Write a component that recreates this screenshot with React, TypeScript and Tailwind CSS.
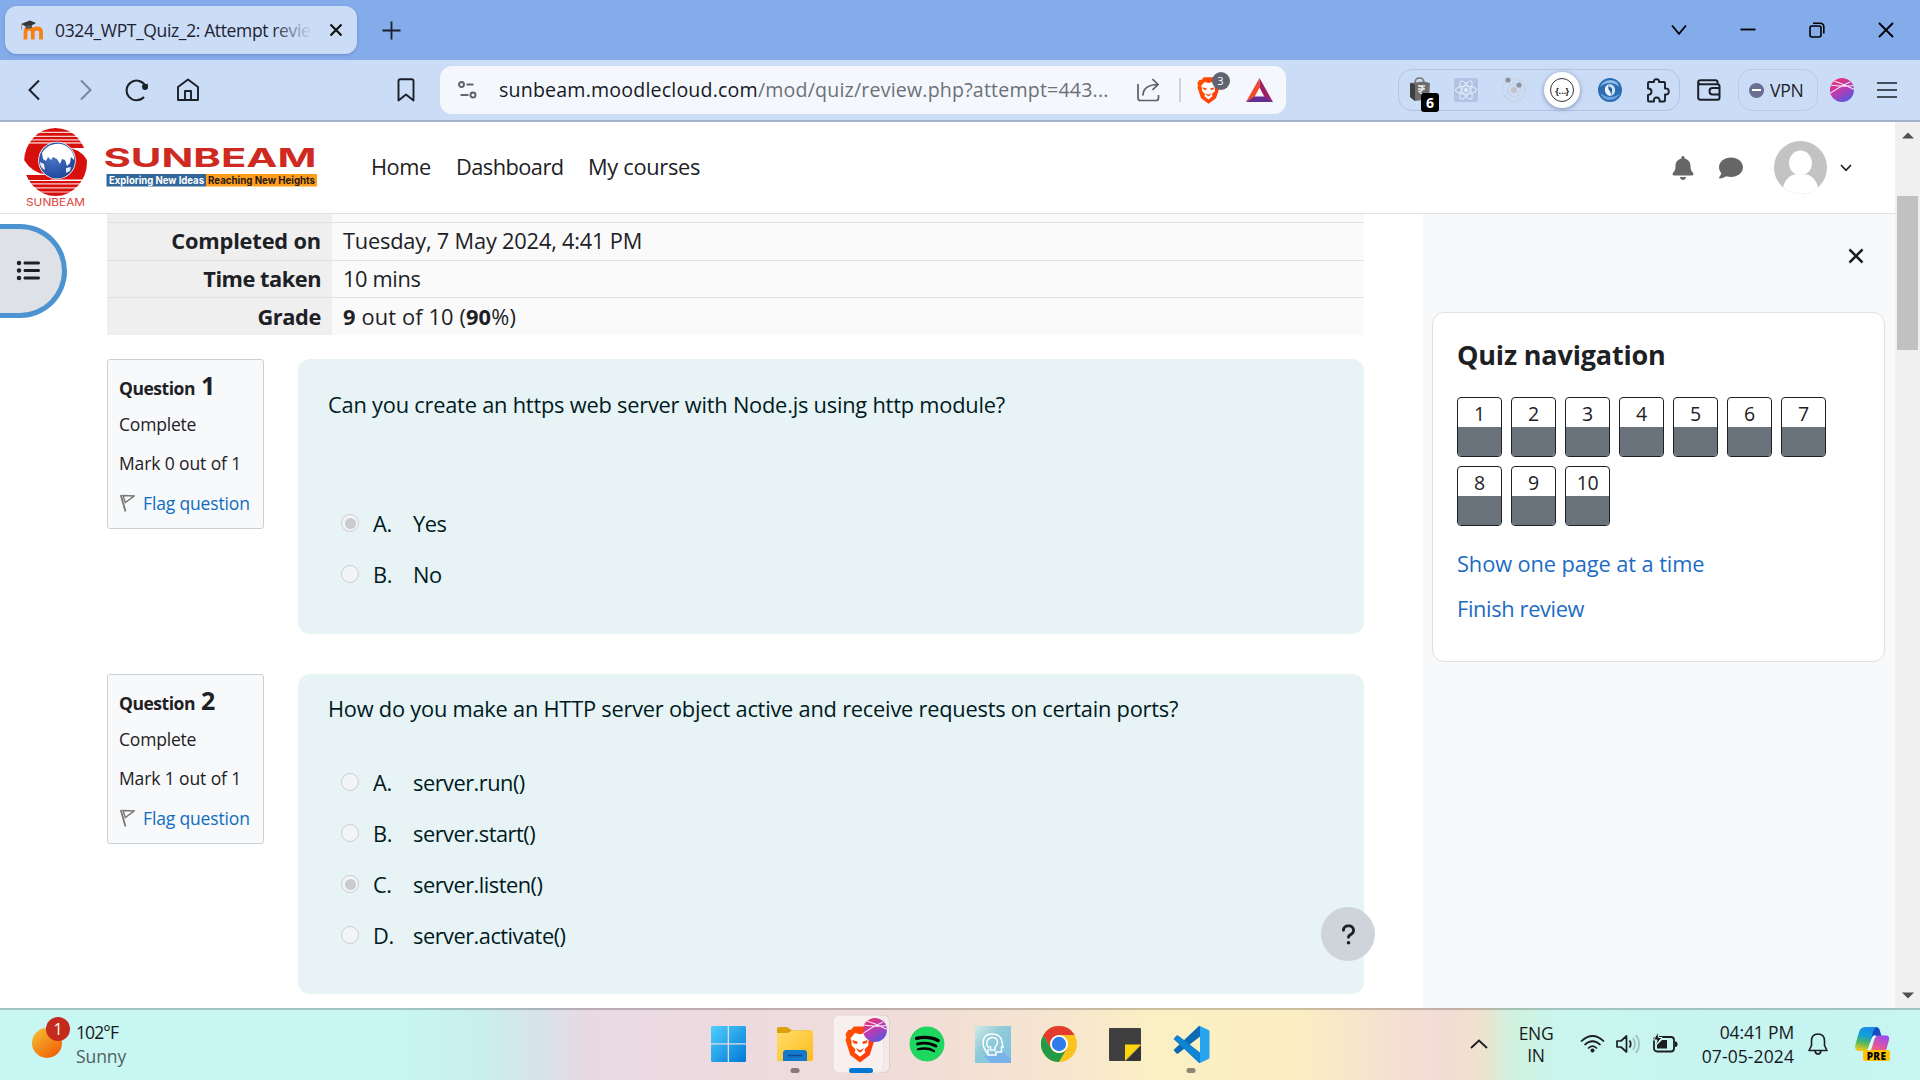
import type { ReactNode } from "react";
import { FaBell, FaComment, FaListUl, FaQuestion, FaSpotify, FaReact } from "react-icons/fa6";

const ink = "#1d2125";

/* ---------- shared drawings ---------- */

function BraveIcon({ w, h, id }: { w: number; h: number; id: string }) {
  return (
    <svg className="block" width={w} height={h} viewBox="0 0 24 28" preserveAspectRatio="none">
      <defs>
        <linearGradient id={id} x1="0" y1="0" x2="1" y2="0.3">
          <stop offset="0" stopColor="#ff5500" />
          <stop offset="1" stopColor="#ff3a0a" />
        </linearGradient>
      </defs>
      <path d="M7 0.300 H17 L19.200 2.800 L21.500 3 L23.700 6.200 L22.900 8.500 L23.600 10.500 L19.800 22 L12 27.700 L4.200 22 L0.400 10.500 L1.100 8.500 L0.300 6.200 L2.500 3 L4.800 2.800Z" fill={`url(#${id})`} />
      <path d="M8 5.300 L12 6.200 L16 5.300 L19.600 9.200 L18.600 12.200 L18.800 14.500 L15.600 17.700 L16.300 20 L12 23.300 L7.700 20 L8.400 17.700 L5.200 14.500 L5.400 12.200 L4.400 9.200Z" fill="#fff" />
      <path d="M5.800 10.600 L10.300 11.900 L9.600 13.600 L6.800 13Z M18.200 10.600 L13.700 11.900 L14.400 13.600 L17.200 13Z M8.700 16.700 L12 18.300 L15.300 16.700 L13.500 19.300 L12 20 L10.500 19.300Z" fill="#fb4a0d" />
    </svg>
  );
}

function ProfileOrb({ size, id }: { size: number; id: string }) {
  return (
    <svg width={size} height={size} viewBox="0 0 24 24">
      <defs>
        <linearGradient id={id} x1="0.2" y1="0" x2="0.8" y2="1">
          <stop offset="0" stopColor="#ef2f6b" />
          <stop offset="0.5" stopColor="#b83cb4" />
          <stop offset="1" stopColor="#4d5be6" />
        </linearGradient>
        <clipPath id={id + "c"}>
          <circle cx="12" cy="12" r="12" />
        </clipPath>
      </defs>
      <g clipPath={`url(#${id}c)`}>
        <rect width="24" height="24" fill={`url(#${id})`} />
        <path d="M-1 16 Q9 9 20 4 M4 3 Q14 6 25 12 M0 7 Q12 9 24 7.500" fill="none" stroke="#f6e6f6" strokeWidth="1.100" />
      </g>
    </svg>
  );
}

function SunbeamLogo() {
  return (
    <svg className="-mt-[2px] shrink-0 overflow-visible" width="296" height="84" viewBox="22 125 296 84">
      <defs>
        <clipPath id="oval">
          <ellipse cx="55.500" cy="162" rx="31.500" ry="34" />
        </clipPath>
        <radialGradient id="sea" cx="0.4" cy="0.4" r="0.7">
          <stop offset="0" stopColor="#4a78c8" />
          <stop offset="1" stopColor="#1a4296" />
        </radialGradient>
      </defs>
      <g clipPath="url(#oval)" fill="#d8100c">
        <rect x="22" y="128" width="68" height="3.800" />
        <rect x="22" y="132.800" width="68" height="3" />
        <rect x="22" y="136.800" width="68" height="2.600" />
        <rect x="22" y="140.400" width="68" height="2" />
        <rect x="22" y="181" width="68" height="2.400" />
        <rect x="22" y="184.400" width="68" height="3" />
        <rect x="22" y="188.400" width="68" height="3.200" />
        <rect x="22" y="192.400" width="68" height="4" />
        <path d="M22 143.500 H90 V148 H66 L57 161 L50 180 H22Z" />
        <path d="M90 150 V179.500 H22 V175 H46 L57 161 L66 146 Q80 147 90 158Z" />
      </g>
      <path d="M86 148 H66 Q80 148 87 160 L91 158Z" fill="#fff" />
      <path d="M24 175 H47 Q32 173 24 160 L20 166Z" fill="#fff" />
      <circle cx="57" cy="160.500" r="18.800" fill="#fff" />
      <circle cx="57" cy="160.500" r="18" fill="url(#sea)" />
      <path d="M42 153 Q46 146 53 144.500 Q62 142 69 148 Q75 154 74 160 L71 157 L70 163 L67 166 L65 160 L62 159 L60 164 L57 159 L53 157 L51 160 L48 157 L46 161 L43 159Z" fill="#fff" />
      <path d="M40 162 L44 164 L45 170 Q40 168 40 162Z M66 168 L71 167 L70 171 L66 173Z" fill="#fff" opacity=".9" />
      <text x="26" y="206" textLength="59" lengthAdjust="spacingAndGlyphs" fontFamily="Inter, sans-serif" fontSize="10.500" fontWeight="400" fill="#dc3f3a">SUNBEAM</text>
      <text x="103.500" y="167" textLength="213" lengthAdjust="spacingAndGlyphs" fontFamily="Inter, sans-serif" fontSize="26" fontWeight="700" fill="#cf2a22">SUNBEAM</text>
      <rect x="106.500" y="174" width="99.500" height="12.500" fill="#336699" />
      <rect x="206" y="174" width="111" height="12.500" fill="#ff9d1b" />
      <text x="109" y="184" textLength="95" lengthAdjust="spacingAndGlyphs" fontFamily="Inter, sans-serif" fontSize="10.300" fontWeight="700" fill="#fff">Exploring New Ideas</text>
      <text x="208" y="184" textLength="107" lengthAdjust="spacingAndGlyphs" fontFamily="Inter, sans-serif" fontSize="10.300" fontWeight="700" fill="#1f1a14">Reaching New Heights</text>
    </svg>
  );
}

/* ---------- browser chrome ---------- */

function TabStrip() {
  return (
    <div className="flex h-[60px] shrink-0 items-center bg-[#84abea]">
      <div className="ml-[5px] flex h-12 w-[352px] items-center rounded-xl bg-[#cbdcf7] pl-[15px] shadow-[0_1px_3px_rgba(60,90,150,0.35)]">
        <svg width="24" height="20" viewBox="0 0 24 20">
          <path d="M5.500 19.500 V12 Q5.500 8.500 9 8.500 Q12.800 8.500 12.800 12 V19.500 M12.800 12 Q12.800 8.500 17 8.500 Q21 8.500 21 12 V19.500" fill="none" stroke="#f98012" strokeWidth="3.800" />
          <path d="M1 4 L10 0.500 L16 3 L8 7.500Z" fill="#333" />
          <path d="M5 5.500 L12 5 V8 L6 9Z" fill="#555" />
          <path d="M1.500 4.500 V10" stroke="#999" strokeWidth="1" />
        </svg>
        <div className="relative ml-[11px] w-[257px] overflow-hidden whitespace-nowrap text-[17.5px] leading-6 tracking-[-0.37px] text-[#1d2330]">
          0324_WPT_Quiz_2: Attempt revie
          <div className="absolute inset-y-0 right-0 w-10 bg-gradient-to-r from-transparent to-[#cbdcf7]" />
        </div>
        <svg className="ml-[17px]" width="14" height="14" viewBox="0 0 14 14">
          <path d="M1.500 1.500 L12.500 12.500 M12.500 1.500 L1.500 12.500" stroke="#111" strokeWidth="2.200" />
        </svg>
      </div>
      <svg className="ml-[25px]" width="19" height="19" viewBox="0 0 19 19">
        <path d="M9.500 0.500 V18.500 M0.500 9.500 H18.500" stroke="#1b1f28" strokeWidth="1.800" />
      </svg>
      <div className="ml-auto flex items-center text-black">
        <Slot w={68}>
          <svg width="16" height="12" viewBox="0 0 16 12"><path d="M1 1.500 L8 9.800 L15 1.500" fill="none" stroke="#000" strokeWidth="1.800" /></svg>
        </Slot>
        <Slot w={69}>
          <svg width="16" height="4" viewBox="0 0 16 4"><path d="M0.500 1.500 H15.500" stroke="#000" strokeWidth="1.800" /></svg>
        </Slot>
        <Slot w={69}>
          <svg width="16" height="16" viewBox="0 0 16 16" fill="none" stroke="#000" strokeWidth="1.600">
            <rect x="1" y="4" width="11" height="11" rx="2" />
            <path d="M4 1.200 H11 Q14.800 1.200 14.800 5 V11.500" />
          </svg>
        </Slot>
        <Slot w={69}>
          <svg width="16" height="16" viewBox="0 0 16 16"><path d="M1 1 L15 15 M15 1 L1 15" stroke="#000" strokeWidth="1.800" /></svg>
        </Slot>
      </div>
    </div>
  );
}

function Slot({ w, children }: { w: number; children: ReactNode }) {
  return (
    <div className="flex shrink-0 items-center justify-center" style={{ width: w }}>
      {children}
    </div>
  );
}

function Toolbar() {
  return (
    <div className="flex h-[62px] shrink-0 items-center border-b-2 border-[#a3b2cb] bg-[#cbdcf7]">
      <div className="ml-[9px] flex items-center">
        <Slot w={51}>
          <svg className="-ml-[2px]" width="14" height="22" viewBox="0 0 14 22"><path d="M12 1.500 L2.500 11 L12 20.500" fill="none" stroke="#1b1f28" strokeWidth="2" /></svg>
        </Slot>
        <Slot w={51}>
          <svg width="14" height="22" viewBox="0 0 14 22"><path d="M2 1.500 L11.500 11 L2 20.500" fill="none" stroke="#7b8799" strokeWidth="2" /></svg>
        </Slot>
        <Slot w={51}>
          <svg width="24" height="24" viewBox="0 0 24 24">
            <path d="M19 19 A10 9.800 0 1 1 20.500 8" fill="none" stroke="#1b1f28" strokeWidth="2" />
            <path d="M16.500 8 L22.800 5.500 L22.500 11Z" fill="#1b1f28" />
            <circle cx="20" cy="9" r="2.900" fill="#1b1f28" />
          </svg>
        </Slot>
        <Slot w={51}>
          <svg width="24" height="24" viewBox="0 0 24 24" fill="none" stroke="#1b1f28" strokeWidth="1.900" strokeLinejoin="round">
            <path d="M2 9 L12 1.500 L22 9 V22 H2Z" />
            <path d="M9 22 V13 H15 V22" />
          </svg>
        </Slot>
      </div>
      <svg className="ml-[184px]" width="18" height="24" viewBox="0 0 18 24">
        <path d="M1.500 3 Q1.500 1.200 3.300 1.200 H14.700 Q16.500 1.200 16.500 3 V22.500 L9 16.500 L1.500 22.500Z" fill="none" stroke="#1b1f28" strokeWidth="1.900" strokeLinejoin="round" />
      </svg>
      <div className="ml-[25px] flex h-12 w-[846px] items-center rounded-xl bg-[#f4f8fd]">
        <svg className="ml-[18px] shrink-0" width="19" height="18" viewBox="0 0 19 18" fill="none" stroke="#5b5f68" strokeWidth="1.900">
          <circle cx="3.500" cy="3.500" r="2.500" /><path d="M8.500 3.500 H15.500" />
          <circle cx="15" cy="14" r="2.500" /><path d="M2.500 14 H10.500" />
        </svg>
        <div className="ml-[22px] w-[630px] whitespace-nowrap text-[19.6px] leading-7 tracking-[0.18px] text-[#6b7078]">
          <span className="text-[#16191f]">sunbeam.moodlecloud.com</span>/mod/quiz/review.php?attempt=443...
        </div>
        <svg className="ml-[8px] shrink-0" width="23" height="24" viewBox="0 0 23 24" fill="none" stroke="#5b5f68" strokeWidth="1.700">
          <path d="M1 6 V20 Q1 22.500 3.500 22.500 H19 Q21.500 22.500 21.500 20 V17" />
          <path d="M6 17.500 Q6 7 20.500 6.500 M15.500 1.200 L21 6.500 L15.500 11.800" />
        </svg>
        <div className="ml-[19px] h-6 w-[1.5px] bg-[#cfd3da]" />
        <div className="relative ml-[16px]">
          <BraveIcon w={23} h={27} id="brA" />
          <div className="absolute -top-[5px] left-[15px] flex h-[18px] w-[18px] items-center justify-center rounded-full bg-[#5f6470] text-[11px] leading-none text-white">3</div>
        </div>
        <svg className="ml-[26px]" width="27" height="24" viewBox="0 0 27 24">
          <path d="M13.500 0 L0 24 L8.500 19 L13.500 9.500Z" fill="#f2492c" />
          <path d="M13.500 0 L27 24 L18.500 19 L13.500 9.500Z" fill="#9e1f63" />
          <path d="M0 24 H27 L18.500 18.500 H8.500Z" fill="#662d91" />
        </svg>
      </div>
      <div className="ml-[112px] flex h-[42px] w-[282px] items-center rounded-[14px] border-[1.5px] border-[#b3c3e2]">
        <div className="relative flex w-[43px] shrink-0 justify-center pr-[2px]">
          <svg width="22" height="26" viewBox="0 0 22 26">
            <path d="M6 6 Q6 1 10.500 1 Q15 1 15 6" fill="none" stroke="#777" strokeWidth="1.500" />
            <path d="M1 6 L15 4.500 L21 6 L20 22 L6 24 L1 20Z" fill="#6e6e6e" />
            <path d="M1 6 L6 7.500 V24 L1 20Z" fill="#3f3f3f" />
            <path d="M9 9 H16 M9 12 H16 M10 9 Q15 10 14 12 Q13 14.500 10 14.500 L14 18" fill="none" stroke="#eee" strokeWidth="1.300" />
          </svg>
          <div className="absolute -bottom-[9px] left-[22px] flex h-[19px] w-[18px] items-center justify-center rounded-[3px] bg-black text-[14px] font-bold leading-none text-white">6</div>
        </div>
        <Slot w={48}>
          <div className="flex h-6 w-6 items-center justify-center rounded-[2px] bg-[#b1c3e3]"><FaReact className="h-[22px] w-[22px] text-[#e8effb]" /></div>
        </Slot>
        <Slot w={48}>
          <svg width="26" height="26" viewBox="0 0 26 26" fill="none" stroke="#c9cdd4" strokeWidth="1.200">
            <circle cx="13" cy="13" r="11.300" strokeDasharray="3 1.500" />
            <circle cx="13" cy="13" r="6.500" strokeDasharray="3 1" />
            <circle cx="13" cy="13" r="3" fill="#c3c3c3" stroke="none" />
            <circle cx="7" cy="3" r="2.600" fill="#8d939c" stroke="none" />
            <circle cx="18" cy="8" r="2.600" fill="#8d939c" stroke="none" />
          </svg>
        </Slot>
        <Slot w={48}>
          <div className="flex h-9 w-9 shrink-0 items-center justify-center rounded-full bg-white shadow-[0_1px_4px_rgba(40,60,110,0.5)]">
            <div className="flex h-6 w-6 items-center justify-center rounded-full border-[1.5px] border-[#333] text-[9px] font-bold leading-none tracking-[-0.5px] text-[#222]">{"{…}"}</div>
          </div>
        </Slot>
        <Slot w={48}>
          <svg width="24" height="24" viewBox="0 0 24 24">
            <circle cx="12" cy="12" r="12" fill="#2b6cb4" />
            <path d="M2 9 Q5 2 13 2 Q20 3 21.500 9 Q17 5 12 5 Q6 5 2 9Z" fill="#8fbbe6" />
            <path d="M22 15 Q19 22 11 22 Q4 21 2.500 15 Q7 19 12 19 Q18 19 22 15Z" fill="#6ba3da" />
            <path d="M7 13 Q6 8 11 6 Q9 11 12 13 Q14 14.500 12.500 18 Q8 17.500 7 13Z" fill="#eef6fd" />
            <path d="M17 11 Q18 16 13 18 Q15 13 12 11 Q10 9.500 11.500 6 Q16 6.500 17 11Z" fill="#cfe3f6" />
            <path d="M11.500 8.500 Q14.500 9.500 14 13 Q13.500 15 12.500 15.500 Q13 13 11.500 12 Q10.500 10.500 11.500 8.500Z" fill="#1b58a0" />
          </svg>
        </Slot>
        <Slot w={48}>
          <svg width="24" height="25" viewBox="0 0 24 25" fill="none" stroke="#1b1f28" strokeWidth="1.900" strokeLinejoin="round">
            <path d="M2 5 Q2 4 3 4 H8 Q7.500 1.200 10.500 1.200 Q13.500 1.200 13 4 H18 Q19 4 19 5 V10.500 Q22.800 10 22.800 13.500 Q22.800 17 19 16.500 V22.500 Q19 23.500 18 23.500 H13.500 Q14 19.500 10.700 19.500 Q7.500 19.500 8 23.500 H3 Q2 23.500 2 22.500 V17 Q5.500 17 5.500 13.700 Q5.500 10.500 2 10.500Z" />
          </svg>
        </Slot>
      </div>
      <svg className="ml-[17px]" width="24" height="22" viewBox="0 0 24 22" fill="none" stroke="#1b1f28" strokeWidth="2" strokeLinejoin="round">
        <path d="M20.500 5 V3 Q20.500 1.200 18.500 1.200 H3.500 Q1.200 1.200 1.200 3.300 Q1.200 5.200 3.500 5.200 H20.500 Q22.500 5.200 22.500 7.200 V18.500 Q22.500 20.700 20.500 20.700 H3.500 Q1.200 20.700 1.200 18.500 V3.500" />
        <path d="M22.500 9 H15.500 Q12.500 9 12.500 12 Q12.500 15.500 15.500 15.500 H22.500" />
      </svg>
      <div className="ml-[17px] flex h-[42px] w-[80px] items-center rounded-[14px] border-[1.5px] border-[#bacae8] pl-[10px]">
        <div className="flex h-[15px] w-[15px] items-center justify-center rounded-full bg-[#696e92]"><div className="h-[2px] w-[9px] bg-white" /></div>
        <span className="ml-[6px] text-[17.6px] tracking-[-0.3px] text-[#1b1f28]">VPN</span>
      </div>
      <div className="ml-[12px]"><ProfileOrb size={24} id="orbA" /></div>
      <svg className="ml-[23px]" width="20" height="16" viewBox="0 0 20 16"><path d="M0 1 H20 M0 8 H20 M0 15 H20" stroke="#1b1f28" strokeWidth="1.700" /></svg>
    </div>
  );
}

/* ---------- site ---------- */

function SiteHeader() {
  return (
    <header className="flex h-[92px] shrink-0 items-center border-b border-[#dee2e6] bg-white pl-[22px] text-[21.8px] text-[#1d2125]">
      <SunbeamLogo />
      <span className="ml-[53px] w-[85px] tracking-[-0.45px]">Home</span>
      <span className="w-[132px] tracking-[-0.55px]">Dashboard</span>
      <span className="tracking-[-0.3px]">My courses</span>
      <div className="ml-auto flex items-center">
        <Slot w={48}><FaBell className="h-6 w-[22px] text-[#666]" /></Slot>
        <Slot w={48}><FaComment className="h-6 w-6 text-[#666]" /></Slot>
        <svg className="ml-[19px]" width="53" height="53" viewBox="0 0 53 53">
          <defs><clipPath id="av"><circle cx="26.500" cy="26.500" r="26.500" /></clipPath></defs>
          <g clipPath="url(#av)">
            <rect width="53" height="53" fill="#c3c3c3" />
            <ellipse cx="26.500" cy="22" rx="11.500" ry="12.500" fill="#fff" />
            <path d="M8 53 Q9 37 20 33.500 H33 Q44 37 45 53Z" fill="#fff" />
          </g>
        </svg>
        <svg className="ml-[13px] mr-[43px]" width="12" height="8" viewBox="0 0 12 8"><path d="M1 1 L6 6.300 L11 1" fill="none" stroke={ink} strokeWidth="1.700" /></svg>
      </div>
    </header>
  );
}

function SummaryRow({ h, label, track, children }: { h: number; label: string; track: string; children: ReactNode }) {
  return (
    <div className="flex items-center border-t border-[#dee2e6] bg-[#fafafa]" style={{ height: h }}>
      <div className={"flex h-full w-[225px] items-center justify-end bg-[#efefef] pr-[11px] font-bold " + track}>{label}</div>
      <div className="pl-[11px]">{children}</div>
    </div>
  );
}

function InfoBox({ n, mark }: { n: number; mark: string }) {
  return (
    <div className="flex h-[170px] w-[157px] flex-col rounded-[3px] border border-[#cad0d7] bg-[#f8f9fa] pl-[11px] pt-[9px] text-[17.5px] leading-6 text-[#1d2125]">
      <div className="h-8 whitespace-nowrap font-bold leading-8 tracking-[-0.48px]">
        Question<span className="ml-[6px] text-[25px]">{n}</span>
      </div>
      <div className="mt-[11px] tracking-[-0.2px]">Complete</div>
      <div className="mt-[15px] tracking-[-0.12px]">{mark}</div>
      <div className="mt-[16px] flex items-center tracking-[-0.15px] text-[#0f6cbf]">
        <svg className="ml-px mr-[8px]" width="15" height="18" viewBox="0 0 15 18" fill="none" stroke="#777" strokeWidth="1.400">
          <path d="M0.800 1 L5.500 17.500" strokeWidth="1.800" /><path d="M3 1.500 L14 2 L5.300 8.500Z" />
        </svg>
        Flag question
      </div>
    </div>
  );
}

function Radio({ on }: { on?: boolean }) {
  return (
    <span className="flex h-[18px] w-[18px] items-center justify-center rounded-full border-[1.5px] border-[#cccfd1] bg-[#f2f4f5]">
      {on && <span className="h-[11px] w-[11px] rounded-full bg-[#c9cbcd]" />}
    </span>
  );
}

function Answers({ items, picked }: { items: string[]; picked: number }) {
  return (
    <div className="flex flex-col">
      {items.map((t, i) => (
        <div key={t} className="flex h-[51px] items-center pb-[2px]">
          <span className="-mt-px ml-[13px]"><Radio on={i === picked} /></span>
          <span className="ml-[14px] w-[40px] tracking-[-0.38px]">{"ABCD"[i]}.</span>
          <span className="tracking-[-0.5px]">{t}</span>
        </div>
      ))}
    </div>
  );
}

function QuizBody() {
  return (
    <main className="w-[1423px] shrink-0 bg-white pl-[107px] text-[21.8px] leading-8 text-[#1d2125]">
      <div className="w-[1257px]">
        <div className="flex h-2 bg-[#fafafa]"><div className="w-[225px] bg-[#efefef]" /></div>
        <SummaryRow h={38} label="Completed on" track="pb-[2px] tracking-[-0.16px]"><div className="pb-[2px] tracking-[-0.2px]">Tuesday, 7 May 2024, 4:41 PM</div></SummaryRow>
        <SummaryRow h={37} label="Time taken" track="tracking-[-0.48px]"><div className="tracking-[-0.35px]">10 mins</div></SummaryRow>
        <SummaryRow h={38} label="Grade" track="tracking-[-0.4px]"><div className="tracking-[0.14px]"><b>9</b> out of 10 (<b>90</b>%)</div></SummaryRow>
      </div>
      <section className="mt-6 flex w-[1257px] items-start justify-between">
        <InfoBox n={1} mark="Mark 0 out of 1" />
        <div className="h-[275px] w-[1066px] rounded-xl bg-[#e7f3f5] pl-[30px] pt-[30px] text-[#001a1e]">
          <p className="mb-[78px] tracking-[-0.21px]">Can you create an https web server with Node.js using http module?</p>
          <Answers items={["Yes", "No"]} picked={0} />
        </div>
      </section>
      <section className="mt-10 flex w-[1257px] items-start justify-between">
        <InfoBox n={2} mark="Mark 1 out of 1" />
        <div className="h-[320px] w-[1066px] rounded-xl bg-[#e7f3f5] pl-[30px] pt-[19px] text-[#001a1e]">
          <p className="mb-[33px] tracking-[-0.22px]">How do you make an HTTP server object active and receive requests on certain ports?</p>
          <Answers items={["server.run()", "server.start()", "server.listen()", "server.activate()"]} picked={2} />
        </div>
      </section>
    </main>
  );
}

function NavDrawer() {
  return (
    <aside className="flex w-[472px] shrink-0 flex-col bg-[#f8f9fb] px-[9px] text-[#1d2125]">
      <div className="flex h-[98px] justify-end pr-[22px] pt-[34px]">
        <svg width="16" height="16" viewBox="0 0 16 16"><path d="M1.500 1.500 L14.500 14.500 M14.500 1.500 L1.500 14.500" stroke={ink} strokeWidth="2.500" /></svg>
      </div>
      <div className="h-[350px] w-[453px] rounded-xl border border-[#dfdfdf] bg-white pl-6">
        <h5 className="mt-[24px] text-[27px] font-bold leading-9 tracking-[-0.18px]">Quiz navigation</h5>
        <div className="mt-[24px] grid w-[378px] grid-cols-7 gap-y-[9px]">
          {[1, 2, 3, 4, 5, 6, 7, 8, 9, 10].map((n) => (
            <div key={n} className="flex h-[60px] w-[45px] flex-col overflow-hidden rounded-[4px] border border-[#1d2125] bg-white">
              <div className="flex h-[29px] items-center justify-center pt-[3px] text-[19.500px] leading-none tracking-[-0.3px]">{n}</div>
              <div className="flex-1 bg-[#6a737b]" />
            </div>
          ))}
        </div>
        <p className="mt-[22px] text-[21.8px] leading-8 tracking-[-0.09px] text-[#1c6bc4]">Show one page at a time</p>
        <p className="mt-[13px] text-[21.8px] leading-8 tracking-[-0.35px] text-[#1c6bc4]">Finish review</p>
      </div>
    </aside>
  );
}

function Scrollbar() {
  return (
    <div className="flex w-[25px] shrink-0 flex-col items-center bg-[#f0f0f0]">
      <svg className="mt-[10px]" width="12" height="7" viewBox="0 0 12 7"><path d="M0 6.500 L6 0.500 L12 6.500Z" fill="#505050" /></svg>
      <div className="mt-[57px] h-[154px] w-[21px] bg-[#c1c1c1]" />
      <svg className="mb-[9px] mt-auto" width="12" height="7" viewBox="0 0 12 7"><path d="M0 0.500 L6 6.500 L12 0.500Z" fill="#505050" /></svg>
    </div>
  );
}

/* ---------- taskbar ---------- */

function TaskApp({ mark, children }: { mark?: string; children: ReactNode }) {
  return (
    <div className="relative flex h-[70px] w-[66px] items-center justify-center">
      {children}
      {mark && <div className={"absolute bottom-[6px] left-1/2 h-[5px] -translate-x-1/2 rounded-full " + mark} />}
    </div>
  );
}

function Taskbar() {
  return (
    <div className="flex h-[72px] shrink-0 items-center border-t-2 border-black/20 bg-[linear-gradient(90deg,#c8f6f2_0px,#c8f6f2_400px,#c9efec_480px,#d8e2ea_540px,#e9d9e1_590px,#ecdae0_700px,#f0dcd8_900px,#f6e6cf_1060px,#fbefc4_1150px,#fbeec3_1300px,#f4dfd2_1400px,#f2dcd6_1440px,#f1e0cd_1478px,#d0f1dd_1510px,#caf6ef_1560px,#c6f4f0_1800px,#c8f6f2_1920px)] bg-origin-border pb-[2px] text-[#15191c]">
      <div className="relative ml-[32px] h-[34px] w-[32px]">
        <svg className="absolute left-0 top-px" width="30" height="30" viewBox="0 0 30 30">
          <defs><linearGradient id="sun" x1="0.15" y1="0.1" x2="0.8" y2="0.9"><stop offset="0" stopColor="#f5b52e" /><stop offset="1" stopColor="#f2640a" /></linearGradient></defs>
          <circle cx="15" cy="15" r="15" fill="url(#sun)" />
        </svg>
        <div className="absolute -top-[10px] left-[14px] flex h-6 w-6 items-center justify-center rounded-full bg-[#c42b1c] text-[16px] leading-none text-white">1</div>
      </div>
      <div className="ml-[12px] w-[619px] text-[17.5px] leading-6">
        <div className="tracking-[-0.9px]">102°F</div>
        <div className="tracking-[-0.1px] text-[#50605f]">Sunny</div>
      </div>
      <div className="flex">
        <TaskApp>
          <svg width="35" height="36" viewBox="0 0 35 36">
            <defs><linearGradient id="win" x1="0" y1="0" x2="1" y2="1"><stop offset="0" stopColor="#4fd0fc" /><stop offset="1" stopColor="#0078d7" /></linearGradient></defs>
            <path d="M1 0 H16.700 V17.200 H0 V1Z M18 0 H34 L35 1 V17.200 H18Z M0 18.500 H16.700 V36 H1 L0 35Z M18 18.500 H35 V35 L34 36 H18Z" fill="url(#win)" />
          </svg>
        </TaskApp>
        <div className="w-px" />
        <TaskApp mark="w-[9px] bg-[#857a7a]">
          <svg width="36" height="34" viewBox="0 0 36 34">
            <defs><linearGradient id="fold" x1="0" y1="0" x2="1" y2="1"><stop offset="0" stopColor="#ffdd6b" /><stop offset="1" stopColor="#fcbc1a" /></linearGradient></defs>
            <path d="M0 1.500 Q0 0 1.500 0 H10 L15 3.500 H34 Q36 3.500 36 6 V12 H0Z" fill="#dfa00c" />
            <path d="M0 6 H11 L15 3.500 H34 Q36 3.500 36 5.500 V33 Q36 34 35 34 H1 Q0 34 0 33Z" fill="url(#fold)" />
            <path d="M6 34 V26 Q6 23 9 23 H27 Q30 23 30 26 V34Z" fill="#1479cc" />
            <path d="M11 28.500 H25" stroke="#0b4b8e" strokeWidth="1.600" />
          </svg>
        </TaskApp>
        <TaskApp mark="w-6 bg-[#0078d4]">
          <div className="absolute left-[9px] top-[6px] h-[58px] w-[53px] rounded-[6px] border border-black/10 bg-[#f7efee]/70" />
          <div className="absolute left-[5px] top-[6px] h-[58px] w-[51px] rounded-[6px] border border-black/5 bg-[#f8f0ef]" />
          <div className="relative -ml-[2px]">
            <BraveIcon w={30} h={37} id="brB" />
            <div className="absolute -top-[8px] left-[18px]"><ProfileOrb size={24} id="orbB" /></div>
          </div>
        </TaskApp>
        <TaskApp>
          <div className="flex h-[34px] w-[34px] items-center justify-center rounded-full bg-black"><FaSpotify className="h-[36px] w-[36px] shrink-0 text-[#1ed760]" /></div>
        </TaskApp>
        <TaskApp>
          <svg width="36" height="37" viewBox="0 0 36 37">
            <defs><linearGradient id="hd" x1="0" y1="0" x2="1" y2="1"><stop offset="0" stopColor="#d3ebe9" /><stop offset="0.4" stopColor="#8fcbd8" /><stop offset="1" stopColor="#7fc0e6" /></linearGradient></defs>
            <rect width="36" height="37" fill="url(#hd)" />
            <path d="M9 30 L27 25 L36 33 V37 H16Z" fill="#7ab2ea" />
            <path d="M13 28 Q8 22 8 17 Q8 8 17 8 Q26 8 27 16 L28 21 H26.500 V26 H21 V29 H13 V23 M14 22 Q11 19 12 15.500 Q14 11 18 11.500 Q23 12 22.500 17 Q22.500 19 20 21 V24 H15.500 V20" fill="none" stroke="#fff" strokeWidth="1.500" />
          </svg>
        </TaskApp>
        <TaskApp>
          <svg width="36" height="36" viewBox="0 0 36 36">
            <circle cx="18" cy="18" r="18" fill="#fcc31e" />
            <path d="M2.410 9 A18 18 0 0 0 18 36 L25.800 22.500 A9 9 0 0 1 10.200 22.500Z" fill="#249a48" />
            <path d="M2.410 9 A18 18 0 0 1 33.590 9 H18 L10.200 22.500Z" fill="#e33b2e" />
            <circle cx="18" cy="18" r="9" fill="#fff" />
            <circle cx="18" cy="18" r="7.200" fill="#2f7de9" />
          </svg>
        </TaskApp>
        <TaskApp>
          <svg width="32" height="33" viewBox="0 0 32 33">
            <path d="M1 0 H31 Q32 0 32 1 V16.500 L16 33 H1 Q0 33 0 32 V1 Q0 0 1 0Z" fill="#3f3f3f" />
            <path d="M16 16.500 H32 L16 32.500Z" fill="#ffd60a" />
            <path d="M32 17 V32 Q32 33 31 33 H16.500Z" fill="#333" />
          </svg>
        </TaskApp>
        <TaskApp mark="w-[9px] bg-[#8b8573]">
          <svg width="37" height="37" viewBox="0 0 37 37">
            <path d="M0.500 24 L3.500 27.500 Q4.500 28 5.500 27.300 L27 10.500 V0 H26Z" fill="#0a6ab5" />
            <path d="M0.500 13 L3.500 9.500 Q4.500 9 5.500 9.700 L27 26.500 V37 H26Z" fill="#0f84d2" />
            <path d="M27 0 L35.500 4 Q36.500 4.600 36.500 6 V31 Q36.500 32.400 35.500 33 L27 37Z" fill="#27a4f0" />
          </svg>
        </TaskApp>
      </div>
      <svg className="ml-[246px]" width="18" height="10" viewBox="0 0 18 10"><path d="M1 9 L9 1.500 L17 9" fill="none" stroke="#1b1f20" strokeWidth="1.900" /></svg>
      <div className="ml-[22px] w-[52px] text-center text-[17.5px] leading-[22.5px] tracking-[-0.4px]">ENG<br />IN</div>
      <svg className="ml-[18px] shrink-0" width="25" height="18" viewBox="0 0 25 18" fill="none" stroke="#1b1f20" strokeWidth="1.700">
        <path d="M1 6.500 Q12.500 -4.500 24 6.500 M4.500 10 Q12.500 2.500 20.500 10 M8 13.500 Q12.500 9 17 13.500" />
        <circle cx="12.500" cy="15.500" r="2" fill="#1b1f20" stroke="none" />
      </svg>
      <svg className="ml-[11px] shrink-0" width="25" height="20" viewBox="0 0 25 20" fill="none" stroke="#1b1f20" strokeWidth="1.700">
        <path d="M1 7 H5 L10.500 2 V18 L5 13 H1Z" strokeLinejoin="round" />
        <path d="M13.500 6.500 Q16 10 13.500 13.500" />
        <path d="M17 4 Q21 10 17 16 M20 1 Q26.500 10 20 19" stroke="#9fbdbb" />
      </svg>
      <svg className="-mt-[4px] ml-[12px] shrink-0" width="25" height="21" viewBox="0 0 25 21">
        <rect x="1" y="5" width="20" height="14.500" rx="3" fill="none" stroke="#1b1f20" strokeWidth="1.800" />
        <path d="M4 16.500 V13 L9 8 H14 V16.500Z" fill="#1b1f20" />
        <path d="M22 9.500 H23 Q24.500 9.500 24.500 12.200 Q24.500 15 23 15 H22Z" fill="#1b1f20" />
        <path d="M5 0 L0.500 8 H4 L2.500 13.500 L9 5.500 H5.500Z" fill="#1b1f20" stroke="#caf6ef" strokeWidth="1" />
      </svg>
      <div className="ml-[18px] w-[98px] text-right text-[17.5px] leading-6">
        <div className="tracking-[-0.15px]">04:41 PM</div>
        <div className="tracking-[0.1px]">07-05-2024</div>
      </div>
      <svg className="ml-[14px] shrink-0" width="20" height="22" viewBox="0 0 20 22" fill="none" stroke="#1b1f20" strokeWidth="1.600" strokeLinejoin="round">
        <path d="M10 1 Q16.500 1 16.500 8 V12.500 L19 17.500 H1 L3.500 12.500 V8 Q3.500 1 10 1Z" /><path d="M7 18 Q7.500 21 10 21 Q12.500 21 13 18" />
      </svg>
      <div className="relative ml-[27px] h-[34px] w-[35px] shrink-0">
        <svg width="35" height="30" viewBox="0 0 35 30">
          <defs>
            <linearGradient id="cp1" x1="0.5" y1="0" x2="0.3" y2="1"><stop offset="0" stopColor="#1b8ce8" /><stop offset="0.35" stopColor="#12a0d8" /><stop offset="0.65" stopColor="#4fb860" /><stop offset="1" stopColor="#f6c915" /></linearGradient>
            <linearGradient id="cp2" x1="0.8" y1="0" x2="0.2" y2="1"><stop offset="0" stopColor="#9a4bf0" /><stop offset="0.5" stopColor="#e0569f" /><stop offset="1" stopColor="#fb7b4d" /></linearGradient>
          </defs>
          <path d="M15 0 H21 Q24 0 25 4 L26.500 9 H20 L15 16Z" fill="#1a4bc4" />
          <path d="M24 8.500 H31 Q35 8.500 34 13 L31.500 22 Q30 28 25 28 H9 Q15 27 16.500 22 L19.500 12 Q20.500 8.500 24 8.500Z" fill="url(#cp2)" />
          <path d="M11 0 H22 Q19 1 18 5 L14 19 Q12.700 24 9 24 H4 Q-0.500 24 0.300 18 L4 5 Q5.500 0 11 0Z" fill="url(#cp1)" />
          <path d="M20.500 9 Q18 9.500 17 13 L14 23" fill="none" stroke="#e8fbf4" strokeWidth="2" />
        </svg>
        <div className="absolute left-[8px] top-[23px] flex h-[11px] w-[27px] items-center justify-center rounded-[2px] bg-[#fdc306] text-[10px] font-extrabold leading-none tracking-[0.3px] text-black">PRE</div>
      </div>
    </div>
  );
}

export default function App() {
  return (
    <div className="flex h-[1080px] w-[1920px] flex-col overflow-hidden bg-white font-['Open_Sans','Noto_Sans',sans-serif]">
      <TabStrip />
      <Toolbar />
      <div className="flex min-h-0 flex-1">
        <div className="flex w-[1895px] flex-col">
          <SiteHeader />
          <div className="relative flex min-h-0 flex-1 overflow-hidden">
            <QuizBody />
            <NavDrawer />
            <button className="absolute left-0 top-[10px] flex h-[94px] w-[67px] items-center rounded-r-[47px] border-y-[5px] border-r-[5px] border-[#4b93d1] bg-[#dee2e6] pb-[2px] pl-[16px]">
              <FaListUl className="h-[25px] w-[24px] text-[#1d2125]" />
            </button>
            <button className="absolute left-[1321px] top-[693px] flex h-[54px] w-[54px] items-center justify-center rounded-full bg-[#ced4da]">
              <FaQuestion className="h-[23px] w-[15px] text-[#1d2125]" />
            </button>
          </div>
        </div>
        <Scrollbar />
      </div>
      <Taskbar />
    </div>
  );
}
